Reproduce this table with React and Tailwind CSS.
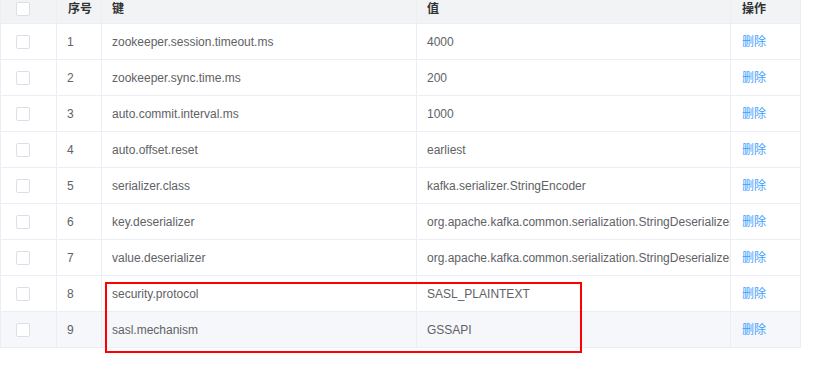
const rows = [
  ["1", "zookeeper.session.timeout.ms", "4000"],
  ["2", "zookeeper.sync.time.ms", "200"],
  ["3", "auto.commit.interval.ms", "1000"],
  ["4", "auto.offset.reset", "earliest"],
  ["5", "serializer.class", "kafka.serializer.StringEncoder"],
  ["6", "key.deserializer", "org.apache.kafka.common.serialization.StringDeserializer"],
  ["7", "value.deserializer", "org.apache.kafka.common.serialization.StringDeserializer"],
  ["8", "security.protocol", "SASL_PLAINTEXT"],
  ["9", "sasl.mechanism", "GSSAPI"],
];

const cols = "grid grid-cols-[56px_45px_315px_314px_70px]";
const cell = "flex items-center border-r border-b border-[#ebeef5] overflow-hidden whitespace-nowrap";

function Checkbox() {
  return <span className="block w-[14px] h-[14px] bg-white border border-[#dcdfe6] rounded-[2px]" />;
}

export default function App() {
  return (
    <div
      className="relative w-[822px] h-[367px] bg-white text-[12px] text-[#606266]"
      style={{ fontFamily: '"Liberation Sans", Arial, "Noto Sans CJK SC", sans-serif' }}
    >
      <div className="w-[801px] border-l border-[#ebeef5]">
        {/* 表头 */}
        <div className={`${cols} h-[24px] bg-[#f2f3f5] text-[#303133] font-semibold`}>
          <div className={`${cell} pl-[15px] pb-[5px]`}>
            <Checkbox />
          </div>
          <div className={`${cell} px-[11px] pb-[5px]`}>序号</div>
          <div className={`${cell} px-[10px] pb-[5px]`}>键</div>
          <div className={`${cell} px-[10px] pb-[5px]`}>值</div>
          <div className={`${cell} px-[11px] pb-[5px]`}>操作</div>
        </div>

        {/* 数据行 */}
        {rows.map(([id, key, value]) => (
          <div
            key={id}
            className={`${cols} h-[36px] ${id === "9" ? "bg-[#f5f7fa]" : "bg-white"}`}
          >
            <div className={`${cell} pl-[15px]`}>
              <Checkbox />
            </div>
            <div className={`${cell} px-[10px]`}>{id}</div>
            <div className={`${cell} px-[10px]`}>{key}</div>
            <div className={`${cell} pl-[10px]`}>{value}</div>
            <div className={`${cell} px-[11px] text-[#409eff]`}>删除</div>
          </div>
        ))}
      </div>

      {/* 标注框 */}
      <div className="absolute left-[105px] top-[282px] w-[477px] h-[71px] border-2 border-[#ff0000]" />
    </div>
  );
}
